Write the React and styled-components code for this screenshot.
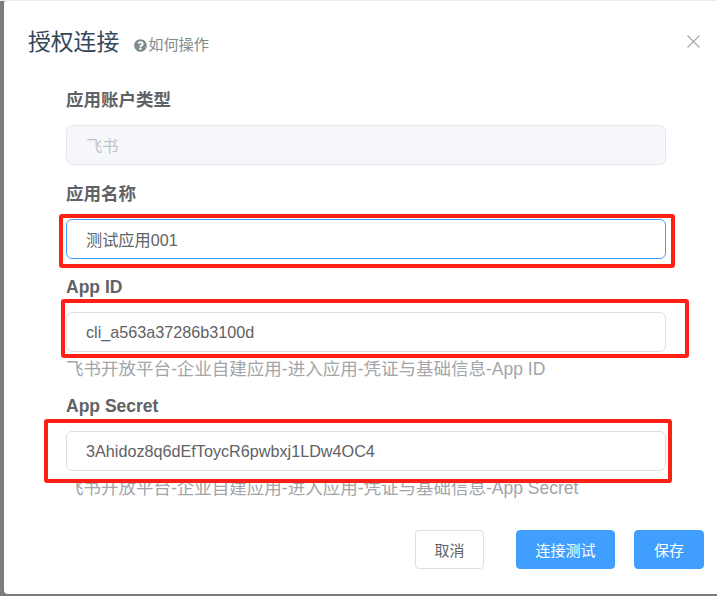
import React from "react";
import styled, { createGlobalStyle } from "styled-components";
import { FaQuestionCircle } from "react-icons/fa";

const Global = createGlobalStyle`
  html, body { margin: 0; padding: 0; }
  body { font-family: "Liberation Sans", "Noto Sans CJK SC", sans-serif; }
`;

const Page = styled.div`
  position: relative;
  width: 717px;
  height: 596px;
  overflow: hidden;
  box-sizing: border-box;
  padding: 1px 0 2px 4px;
  background: linear-gradient(#ececec 1px, #7d7d7d 1px);
  display: flex;
`;

const Dialog = styled.div`
  flex: 1;
  background: #fff;
  border-radius: 2px 0 0 4px;
  display: flex;
  flex-direction: column;
`;

const Header = styled.div`
  height: 87px;
  box-sizing: border-box;
  padding: 23px 17px 0 24px;
  display: flex;
  align-items: flex-start;
`;

const Title = styled.span`
  font-size: 22.8px;
  line-height: 36px;
  color: #33475b;
`;

const Help = styled.span`
  margin: 11px 0 0 15px;
  display: flex;
  align-items: center;
  gap: 1px;
  font-size: 15.2px;
  line-height: 20px;
  color: #7f8c8d;
`;

const Close = styled.svg`
  width: 13px;
  height: 13px;
  margin: 11px 0 0 auto;
  stroke: #a2a5ab;
  stroke-width: 1.1;
`;

const Form = styled.div`
  padding: 0 51px 0 62px;
`;

const Item = styled.div`
  margin-bottom: 16.6px;
`;

const Label = styled.div`
  font-size: 17.5px;
  font-weight: 700;
  line-height: 25px;
  margin-bottom: 12px;
  color: #606266;
`;

const Input = styled.input`
  display: block;
  width: 100%;
  height: 40px;
  box-sizing: border-box;
  padding: 0 19px;
  border-radius: 6px;
  border: 1px solid ${(p) => (p.$focused ? "#409eff" : p.disabled ? "#e4e7ed" : "#dcdfe6")};
  background: ${(p) => (p.disabled ? "#f5f7fa" : "#fff")};
  color: ${(p) => (p.disabled ? "#c0c4cc" : "#606266")};
  font: 16.2px "Liberation Sans", "Noto Sans CJK SC", sans-serif;
  outline: none;
  opacity: 1;
  -webkit-text-fill-color: currentColor;
`;

const Hint = styled.div`
  font-size: 17.5px;
  line-height: 34px;
  margin-bottom: -8.6px;
  white-space: nowrap;
  color: #a3a5a9;
`;

const Footer = styled.div`
  margin-top: auto;
  padding: 0 13px 25px 0;
  display: flex;
  justify-content: flex-end;
`;

const Button = styled.button`
  height: 39px;
  width: ${(p) => p.$w}px;
  padding: 0;
  margin-left: ${(p) => p.$gap}px;
  border-radius: 4px;
  border: 1px solid ${(p) => (p.$primary ? "#409eff" : "#dcdfe6")};
  background: ${(p) => (p.$primary ? "#409eff" : "#fff")};
  color: ${(p) => (p.$primary ? "#fff" : "#606266")};
  font: 15px "Liberation Sans", "Noto Sans CJK SC", sans-serif;
`;

const Mark = styled.div`
  position: absolute;
  left: ${(p) => p.$x}px;
  top: ${(p) => p.$y}px;
  width: ${(p) => p.$w}px;
  height: ${(p) => p.$h}px;
  box-sizing: border-box;
  border: 4px solid #ff2015;
  border-radius: 3px;
`;

const Mask = styled.div`
  position: absolute;
  left: 60px;
  top: 483px;
  width: 13px;
  height: 14px;
  background: #fff;
`;

export default function App() {
  return (
    <Page>
      <Global />
      <Dialog>
        <Header>
          <Title>授权连接</Title>
          <Help>
            <FaQuestionCircle size={13} />
            如何操作
          </Help>
          <Close viewBox="0 0 13 13">
            <path d="M0.5 0.5L12.5 12.5M12.5 0.5L0.5 12.5" />
          </Close>
        </Header>
        <Form>
          <Item>
            <Label>应用账户类型</Label>
            <Input disabled value="飞书" readOnly />
          </Item>
          <Item>
            <Label>应用名称</Label>
            <Input $focused value="测试应用001" readOnly />
          </Item>
          <Item>
            <Label>App ID</Label>
            <Input value="cli_a563a37286b3100d" readOnly />
            <Hint>飞书开放平台-企业自建应用-进入应用-凭证与基础信息-App ID</Hint>
          </Item>
          <Item>
            <Label>App Secret</Label>
            <Input value="3Ahidoz8q6dEfToycR6pwbxj1LDw4OC4" readOnly />
            <Hint>飞书开放平台-企业自建应用-进入应用-凭证与基础信息-App Secret</Hint>
          </Item>
        </Form>
        <Footer>
          <Button $w={69} $gap={0}>取消</Button>
          <Button $primary $w={99} $gap={32}>连接测试</Button>
          <Button $primary $w={70} $gap={19}>保存</Button>
        </Footer>
      </Dialog>
      <Mask />
      <Mark $x={59} $y={214} $w={616} $h={54} />
      <Mark $x={61} $y={299} $w={628} $h={59} />
      <Mark $x={44} $y={419} $w={628} $h={64} />
    </Page>
  );
}
